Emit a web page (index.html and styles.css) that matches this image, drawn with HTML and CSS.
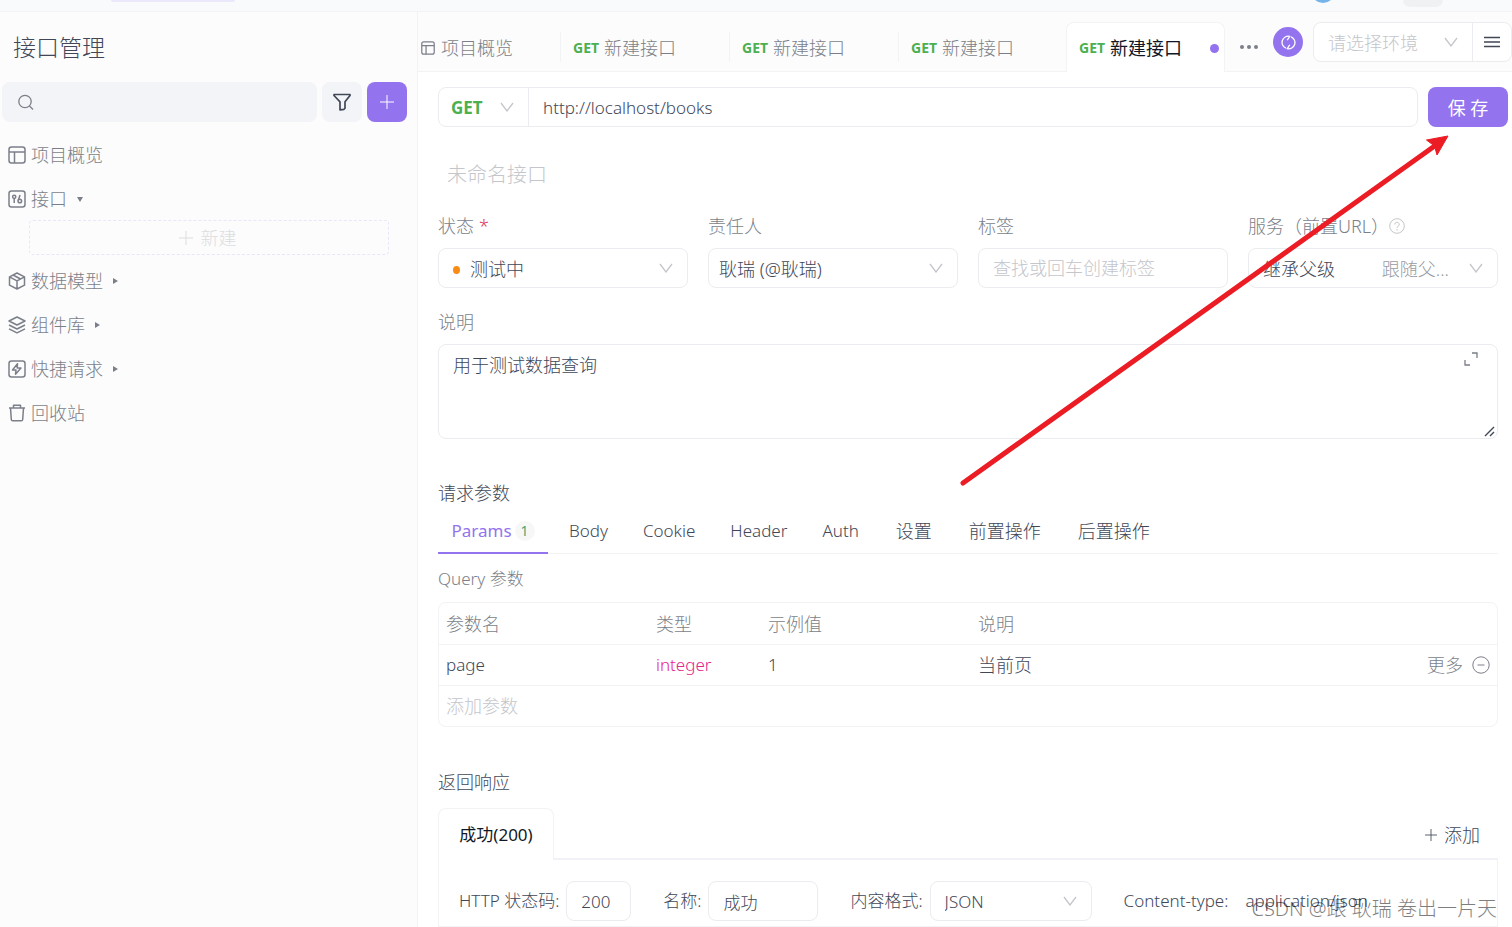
FILE: index.html
```
<!DOCTYPE html>
<html lang="zh-CN">
<head>
<meta charset="utf-8">
<title>接口管理</title>
<link rel="stylesheet" href="styles.css">
</head>
<body>
<svg class="sprite" aria-hidden="true">
  <symbol id="chevron" viewBox="0 0 14 10"><path d="M1 1l6 8 6-8"/></symbol>
  <symbol id="plus" viewBox="0 0 14 14"><path d="M7 0v14M0 7h14"/></symbol>
  <symbol id="layout" viewBox="0 0 18 18"><rect x="1" y="1" width="16" height="16" rx="2.5"/><path d="M1 6h16M6.5 6v11"/></symbol>
</svg>

<header class="topbar">
  <span class="topbar-tab"></span>
  <span class="topbar-avatar"></span>
  <span class="topbar-chip"></span>
</header>

<div class="workspace">
  <aside class="sidebar">
    <h1 class="sidebar-title">接口管理</h1>
    <div class="search-row">
      <label class="search">
        <svg class="icon-search" viewBox="0 0 16 16"><circle cx="7" cy="7.500" r="6.200"/><path d="M11.500 12l3.500 3.500"/></svg>
        <input class="search-input" type="text" aria-label="搜索">
      </label>
      <button class="square-btn" aria-label="筛选"><svg class="icon-filter" viewBox="0 0 18 18"><path d="M1 1.500h16v1l-5 6.300v6.400l-1 1.100-4 .5V8.800L1 2.500z"/></svg></button>
      <button class="square-btn square-btn-primary" aria-label="新增"><svg class="icon-plus"><use href="#plus"/></svg></button>
    </div>
    <nav class="tree">
      <a class="tree-item" href="#"><svg class="icon"><use href="#layout"/></svg>项目概览</a>
      <a class="tree-item" href="#"><svg class="icon" viewBox="0 0 18 18"><rect x="1" y="1" width="16" height="16" rx="2.500"/><circle cx="6.200" cy="6.800" r="1.600"/><path d="M6.200 8.400V13M10.300 10.500L12 5"/><circle cx="11.800" cy="11" r="1.800"/></svg>接口<span class="caret caret-down"></span></a>
      <button class="new-btn"><svg class="icon-plus"><use href="#plus"/></svg>新建</button>
      <a class="tree-item" href="#"><svg class="icon" viewBox="0 0 18 18"><path d="M9 1l7.500 3.800v8.400L9 17l-7.500-3.800V4.800zM1.500 4.800L9 8.800l7.500-4M9 8.800V17M5 3l7.600 4"/></svg>数据模型<span class="caret"></span></a>
      <a class="tree-item" href="#"><svg class="icon" viewBox="0 0 18 18"><path d="M9 1l8 4-8 4-8-4zM1 9l8 4 8-4M1 12.800l8 4 8-4"/></svg>组件库<span class="caret"></span></a>
      <a class="tree-item" href="#"><svg class="icon" viewBox="0 0 18 18"><rect x="1" y="1" width="16" height="16" rx="2.500"/><path d="M9.500 3.800L4.500 10H8l-.5 4.200 5.500-6.200H9.200z"/></svg>快捷请求<span class="caret"></span></a>
      <a class="tree-item" href="#"><svg class="icon" viewBox="0 0 18 18"><path d="M1 4h16M5.500 4V1.200h7V4M2.500 4l.8 11.500q.1 1.300 1.400 1.300h8.600q1.300 0 1.400-1.300L15.500 4"/></svg>回收站</a>
    </nav>
  </aside>

  <main class="main">
    <div class="tabbar">
      <button class="tab tab-overview"><svg class="icon-small"><use href="#layout"/></svg>项目概览</button>
      <button class="tab"><span class="verb">GET</span>新建接口</button>
      <button class="tab"><span class="verb">GET</span>新建接口</button>
      <button class="tab"><span class="verb">GET</span>新建接口</button>
      <button class="tab tab-active"><span class="verb">GET</span>新建接口<span class="unsaved"></span></button>
      <button class="more" aria-label="更多标签"><i></i><i></i><i></i></button>
      <button class="sync" aria-label="同步"><svg viewBox="0 0 16 16"><path d="M5.200 14.100A6.700 6.700 0 0 1 9.300 1.400L6.600 5.600M10.800 1.900A6.700 6.700 0 0 1 6.700 14.600L9.400 10.400"/></svg></button>
      <div class="env">
        <div class="select-wrap env-select">
          <select class="select placeholder" aria-label="环境"><option>请选择环境</option></select>
          <svg class="chevron"><use href="#chevron"/></svg>
        </div>
        <button class="menu-btn" aria-label="菜单"><svg viewBox="0 0 16 12"><path d="M0 1.500h16M0 6h16M0 10.500h16"/></svg></button>
      </div>
    </div>

    <form class="content">
      <div class="url-row">
        <div class="url-box">
          <div class="select-wrap method-wrap">
            <select class="select method" aria-label="请求方法"><option>GET</option></select>
            <svg class="chevron"><use href="#chevron"/></svg>
          </div>
          <input class="url-input" type="text" aria-label="请求地址" value="http://localhost/books">
        </div>
        <button class="save" type="button">保 存</button>
      </div>

      <input class="name-input" type="text" aria-label="接口名称" placeholder="未命名接口">

      <div class="fields">
        <div class="field">
          <label for="status">状态 <span class="required">*</span></label>
          <div class="select-wrap box">
            <span class="status-dot"></span>
            <select class="select status" id="status"><option>测试中</option></select>
            <svg class="chevron"><use href="#chevron"/></svg>
          </div>
        </div>
        <div class="field">
          <label for="owner">责任人</label>
          <div class="select-wrap box">
            <select class="select owner" id="owner"><option>耿瑞 (@耿瑞)</option></select>
            <svg class="chevron"><use href="#chevron"/></svg>
          </div>
        </div>
        <div class="field">
          <label for="tags">标签</label>
          <input class="box text-input" id="tags" type="text" placeholder="查找或回车创建标签">
        </div>
        <div class="field">
          <label class="label-help" for="server">服务（前置URL）<svg class="help" viewBox="0 0 16 16"><circle cx="8" cy="8" r="7.300"/><path d="M5.800 6.500a2.200 2.200 0 1 1 3.200 1.900q-1 .5-1 1.400M8 11v1.500"/></svg></label>
          <div class="select-wrap box">
            <select class="select server" id="server"><option>继承父级</option></select>
            <span class="inherit">跟随父...</span>
            <svg class="chevron"><use href="#chevron"/></svg>
          </div>
        </div>
      </div>

      <div class="field description">
        <label for="desc">说明</label>
        <div class="desc-wrap">
          <textarea class="box desc" id="desc">用于测试数据查询</textarea>
          <svg class="expand" viewBox="0 0 14 14"><path d="M8 1h5v5M1 8v5h5"/></svg>
          <svg class="grip" viewBox="0 0 12 12"><path d="M1 11L10 2M6 11l4-4"/></svg>
        </div>
      </div>

      <h2 class="section-title">请求参数</h2>
      <div class="param-tabs">
        <button class="ptab ptab-active" type="button">Params<span class="count">1</span></button>
        <button class="ptab" type="button">Body</button>
        <button class="ptab" type="button">Cookie</button>
        <button class="ptab" type="button">Header</button>
        <button class="ptab" type="button">Auth</button>
        <button class="ptab ptab-cjk" type="button">设置</button>
        <button class="ptab ptab-cjk" type="button">前置操作</button>
        <button class="ptab ptab-cjk" type="button">后置操作</button>
      </div>
      <h3 class="sub-title">Query 参数</h3>
      <div class="table-frame">
        <table class="params">
          <colgroup><col class="col-name"><col class="col-type"><col class="col-example"><col></colgroup>
          <thead><tr><th>参数名</th><th>类型</th><th>示例值</th><th>说明</th></tr></thead>
          <tbody>
            <tr><td>page</td><td class="type">integer</td><td>1</td>
              <td><div class="last-cell">当前页<span class="row-actions">更多<svg class="minus" viewBox="0 0 18 18"><circle cx="9" cy="9" r="8.200"/><path d="M5.500 9h7"/></svg></span></div></td></tr>
            <tr><td class="add-param" colspan="4">添加参数</td></tr>
          </tbody>
        </table>
      </div>

      <h2 class="section-title response-title">返回响应</h2>
      <div class="response-tabs">
        <button class="rtab" type="button">成功(200)</button>
        <div class="rtabs-rest"><button class="add-response" type="button"><svg class="icon-add"><use href="#plus"/></svg>添加</button></div>
      </div>
      <div class="response-body">
        <label class="pair">HTTP 状态码:<input class="box text-input code" type="text" value="200"></label>
        <label class="pair">名称:<input class="box text-input rname" type="text" value="成功"></label>
        <label class="pair">内容格式:
          <span class="select-wrap box format">
            <select class="select"><option>JSON</option></select>
            <svg class="chevron"><use href="#chevron"/></svg>
          </span>
        </label>
        <div class="ctype"><span>Content-type:</span><span>application/json</span></div>
      </div>
    </form>
  </main>
</div>

<svg class="arrow" viewBox="0 0 500 360" aria-hidden="true"><path class="arrow-line" d="M9 349L482 11"/><path class="arrow-head" d="M494 2L472.500 6l8 6 2.500 9z"/></svg>
<div class="watermark">CSDN @跟 耿瑞 卷出一片天</div>
</body>
</html>
```
FILE: styles.css
```
* { box-sizing: border-box; }

:root {
  --purple: #9373ee;
  --line: #ebecef;
  --line-soft: #f2f3f5;
  --text: #414757;
  --muted: #7b7f89;
  --faint: #c4c6cb;
  --green: #4caf50;
}

body {
  margin: 0;
  height: 100vh;
  overflow: hidden;
  position: relative;
  display: flex;
  flex-direction: column;
  background: #fff;
  color: var(--text);
  font: 300 17px/24px "Noto Sans", "Noto Sans CJK SC", sans-serif;
}

button, input, select, textarea {
  font: inherit;
  color: inherit;
  border: 0;
  padding: 0;
  margin: 0;
  background: none;
  outline: 0;
}

svg { fill: none; stroke: currentColor; flex: none; }
.sprite { position: absolute; width: 0; height: 0; }
::placeholder { color: var(--faint); opacity: 1; }
h1, h2, h3 { margin: 0; font-weight: 300; }

/* Top bar */
.topbar {
  height: 12px;
  flex: none;
  display: flex;
  align-items: flex-start;
  overflow: hidden;
  background: #f9fafc;
  border-bottom: 1px solid var(--line-soft);
  padding: 0 69px 0 111px;
}
.topbar-tab { width: 124px; height: 2px; background: #ebe8fb; border-radius: 0 0 4px 4px; }
.topbar-avatar { width: 24px; height: 24px; margin: -21px 68px 0 auto; border-radius: 50%; background: #74b4ea; }
.topbar-chip { width: 40px; height: 7px; border-radius: 0 0 8px 8px; background: #f0f1f3; }

.workspace { flex: 1; min-height: 0; display: flex; }

/* Sidebar */
.sidebar {
  width: 418px;
  flex: none;
  background: #fcfcfc;
  border-right: 1px solid var(--line-soft);
}
.sidebar-title { font-size: 23px; line-height: 36px; padding: 17px 13px; }
.search-row { display: flex; gap: 5px; padding: 0 10px 0 2px; }
.search {
  flex: 1;
  height: 40px;
  display: flex;
  align-items: center;
  gap: 8px;
  padding: 0 16px;
  background: #f3f4f8;
  border-radius: 8px;
}
.search-input { flex: 1; min-width: 0; }
.icon-search { width: 16px; height: 16px; color: var(--muted); stroke-width: 1.3; }
.square-btn {
  width: 40px;
  height: 40px;
  display: flex;
  align-items: center;
  justify-content: center;
  border-radius: 8px;
  background: #f3f4f8;
}
.square-btn-primary { background: var(--purple); color: #fff; }
.icon-filter { width: 18px; height: 18px; stroke-width: 1.7; stroke-linejoin: round; }
.icon-plus { width: 14px; height: 14px; }
.tree { padding: 11px 8px; color: var(--muted); font-size: 18px; }
.tree-item {
  height: 44px;
  display: flex;
  align-items: center;
  gap: 5px;
  color: inherit;
  text-decoration: none;
}
.icon { width: 18px; height: 18px; stroke-width: 1.5; stroke-linejoin: round; }
.caret {
  margin-left: 5px;
  border-left: 5px solid currentColor;
  border-top: 3px solid transparent;
  border-bottom: 3px solid transparent;
}
.caret-down {
  border-top: 5px solid currentColor;
  border-bottom: 0;
  border-left: 3px solid transparent;
  border-right: 3px solid transparent;
}
.new-btn {
  width: 360px;
  height: 35px;
  margin: -1px 0 4px 21px;
  display: flex;
  align-items: center;
  justify-content: center;
  gap: 8px;
  padding-right: 3px;
  border: 1px dashed #e9e6fb;
  border-radius: 4px;
  color: #dcdde0;
}

/* Tab bar */
.main { flex: 1; min-width: 0; display: flex; flex-direction: column; }
.tabbar {
  height: 60px;
  flex: none;
  display: flex;
  padding-top: 10px;
  background: #fcfcfc;
  box-shadow: inset 0 -1px var(--line-soft);
}
.tab {
  width: 169px;
  height: 50px;
  display: flex;
  align-items: center;
  gap: 5px;
  padding: 2px 12px 0;
  color: var(--muted);
  font-size: 18px;
  white-space: nowrap;
  background: linear-gradient(var(--line-soft), var(--line-soft)) right 10px / 1px 30px no-repeat;
}
.tab:nth-child(4) { background: none; width: 167px; }
.tab-overview { width: 143px; padding-left: 3px; gap: 6px; }
.icon-small { width: 14px; height: 14px; stroke-width: 1.6; }
.verb { color: var(--green); font-size: 14px; font-weight: 700; }
.tab-active {
  width: 159px;
  padding-top: 1px;
  color: #101828;
  font-weight: 400;
  background: #fff;
  border: 1px solid var(--line-soft);
  border-bottom: 0;
  border-radius: 8px 8px 0 0;
}
.unsaved { width: 9px; height: 9px; border-radius: 50%; background: var(--purple); margin-left: auto; margin-right: -7px; }
.more { width: 48px; display: flex; align-items: center; justify-content: center; gap: 3px; }
.more i { width: 4px; height: 4px; border-radius: 50%; background: var(--muted); }
.sync {
  width: 30px;
  height: 30px;
  margin: 5px 10px 0 auto;
  display: flex;
  align-items: center;
  justify-content: center;
  border-radius: 50%;
  background: var(--purple);
  color: #fff;
}
.sync svg { width: 15px; height: 15px; stroke-width: 1.4; }
.env {
  display: flex;
  width: 199px;
  height: 40px;
  background: #fff;
  border: 1px solid var(--line);
  border-radius: 8px;
}
.env-select { flex: 1; }
.menu-btn { width: 39px; display: flex; align-items: center; justify-content: center; border-left: 1px solid var(--line); }
.menu-btn svg { width: 16px; height: 12px; stroke-width: 1.6; }

/* Shared controls */
.select-wrap { position: relative; display: flex; align-items: center; }
.select { appearance: none; flex: 1; width: 100%; height: 100%; padding: 2px 40px 0 14px; }
.chevron { position: absolute; right: 14px; top: 14px; width: 14px; height: 10px; color: var(--faint); stroke-width: 1.3; pointer-events: none; }
.box { height: 40px; border: 1px solid var(--line); border-radius: 8px; background: #fff; }
.text-input { padding: 0 14px; }
.placeholder { color: var(--faint); font-size: 18px; }

/* Form */
.content { flex: 1; min-height: 0; overflow: hidden; padding: 15px 14px 0 20px; }
.url-row { display: flex; gap: 10px; margin-right: -10px; }
.url-box { flex: 1; display: flex; height: 40px; border: 1px solid var(--line); border-radius: 8px; }
.method-wrap { width: 90px; border-right: 1px solid var(--line); }
.method { padding: 2px 30px 0 12px; color: var(--green); font-weight: 700; }
.url-input { flex: 1; min-width: 0; padding: 2px 14px 0; }
.save { width: 80px; height: 40px; padding-top: 2px; border-radius: 8px; background: var(--purple); color: #fff; font-size: 18px; font-weight: 400; }
.name-input { display: block; width: 100%; height: 40px; margin-top: 27px; padding: 0 9px; font-size: 20px; }

.fields { display: grid; grid-template-columns: repeat(4, 1fr); gap: 20px; margin-top: 20px; }
.field { display: flex; flex-direction: column; gap: 10px; min-width: 0; font-size: 18px; }
.field > label { color: var(--muted); display: flex; align-items: center; gap: 5px; white-space: nowrap; }
.field > .label-help { gap: 0; }
.required { color: #e0355b; }
.help { width: 16px; height: 16px; color: var(--faint); }
.status-dot { position: absolute; left: 14px; top: 17px; width: 7px; height: 8px; border-radius: 50%; background: #fa8c16; }
.status { padding-left: 31px; }
.owner { padding-left: 10px; }
.inherit { position: absolute; right: 48px; top: 8px; color: #989ba3; pointer-events: none; }
.description { margin-top: 22px; }
.desc-wrap { position: relative; display: flex; }
.desc { width: 100%; height: 95px; padding: 8px 14px; resize: vertical; }
.desc::-webkit-resizer { background: transparent; }
.expand { position: absolute; right: 20px; top: 8px; width: 14px; height: 14px; color: var(--muted); stroke-width: 1.3; }
.grip { position: absolute; right: 2px; bottom: 2px; width: 12px; height: 12px; stroke-width: 1.4; pointer-events: none; }

.section-title { font-size: 18px; margin-top: 42px; }
.param-tabs { display: flex; gap: 35px; margin-top: 5px; border-bottom: 1px solid var(--line-soft); }
.ptab { height: 43px; padding-bottom: 2px; white-space: nowrap; }
.ptab-cjk { font-size: 18px; padding-left: 2px; }
.ptab-active {
  width: 110px;
  margin: 0 -14px -1px 0;
  height: 44px;
  padding-bottom: 3px;
  display: flex;
  align-items: center;
  justify-content: center;
  gap: 3px;
  color: var(--purple);
  font-weight: 400;
  box-shadow: inset 0 -2px var(--purple);
}
.count { width: 20px; height: 20px; border-radius: 50%; background: #f7f7f8; color: #45a871; font-size: 14px; line-height: 20px; }
.sub-title { font-size: 17px; color: var(--muted); margin: 13px 0 11px; }
.table-frame { border: 1px solid var(--line-soft); border-radius: 8px; }
.params { width: 100%; table-layout: fixed; border-collapse: separate; border-spacing: 0; }
.params th, .params td { height: 41px; padding: 0 7px; text-align: left; font-weight: 300; }
.params th { color: var(--muted); font-size: 18px; }
.params tbody td { border-top: 1px solid var(--line-soft); }
.col-name { width: 210px; }
.col-type { width: 112px; }
.col-example { width: 210px; }
.params .type { color: #e6238b; }
.params .add-param { color: var(--faint); font-size: 18px; }
.last-cell { display: flex; align-items: center; font-size: 18px; }
.row-actions { margin-left: auto; display: flex; align-items: center; gap: 9px; color: var(--muted); }
.minus { width: 18px; height: 18px; stroke-width: 1; }

.response-title { margin: 43px 0 14px; }
.response-tabs { display: flex; height: 52px; }
.rtab {
  width: 116px;
  border: 1px solid var(--line-soft);
  border-bottom: 0;
  border-radius: 8px 8px 0 0;
  color: #101828;
  font-weight: 400;
}
.rtabs-rest { flex: 1; display: flex; justify-content: flex-end; border-bottom: 2px solid #f1f2f8; padding: 3px 18px 0 0; }
.add-response { display: flex; align-items: center; gap: 7px; font-size: 18px; }
.icon-add { width: 12px; height: 12px; }
.response-body {
  display: flex;
  align-items: center;
  gap: 32px;
  height: 67px;
  padding: 21px 0 5px 20px;
  border: 1px solid var(--line-soft);
  border-top: 0;
  white-space: nowrap;
}
.pair { display: flex; align-items: center; gap: 7px; }
.code { width: 65px; }
.rname { width: 110px; }
.format { width: 162px; }
.ctype { display: flex; gap: 17px; }

/* Overlays */
.arrow { position: absolute; right: 58px; top: 134px; width: 500px; height: 360px; pointer-events: none; }
.arrow-line { stroke: #ec1c24; stroke-width: 5; stroke-linecap: round; }
.arrow-head { fill: #ec1c24; stroke: #ec1c24; }
.watermark { position: absolute; right: 15px; bottom: 5px; font-size: 20px; line-height: 26px; color: #000; opacity: .5; pointer-events: none; white-space: nowrap; }
```
